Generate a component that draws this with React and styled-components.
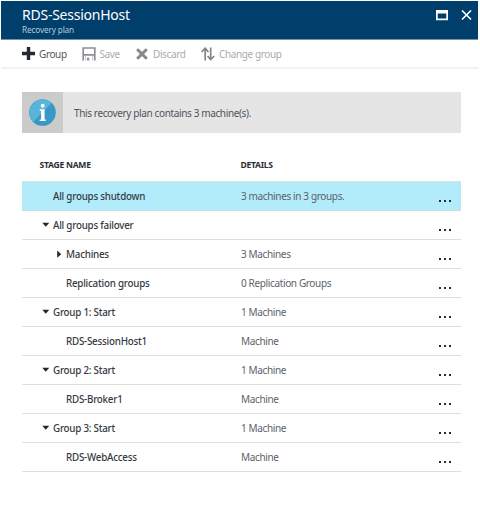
import React from "react";
import styled, { createGlobalStyle } from "styled-components";

const Global = createGlobalStyle`
  * { box-sizing: border-box; }
  body { margin: 0; background: #fff; font-family: "Noto Sans", "Segoe UI", sans-serif; }
  svg { display: block; flex: none; }
`;

const Blade = styled.main`
  width: 480px;
  height: 518px;
  padding: 1px 1px 0;
  overflow: hidden;
`;

const Header = styled.header`
  display: flex;
  justify-content: space-between;
  height: 39px;
  margin-right: 1px;
  padding: 4px 6px 0 21px;
  background: #003e6c;
  border-bottom: 1px solid #7193ae;
  color: #fff;
`;

const Title = styled.h1`
  margin: 0;
  font-size: 14px;
  font-weight: 400;
  line-height: 20px;
  letter-spacing: -0.24px;
`;

const Subtitle = styled.p`
  margin: 0;
  font-size: 8.2px;
  line-height: 9px;
  letter-spacing: -0.13px;
  color: #b5cbdc;
`;

const WindowButtons = styled.div`
  display: flex;
  gap: 13px;
  padding-top: 5px;
`;

const Toolbar = styled.nav`
  display: flex;
  height: 29px;
  padding-left: 21px;
  border-bottom: 2px solid #f2f2f2;
`;

const Command = styled.button`
  display: flex;
  align-items: center;
  gap: ${(p) => p.$gap}px;
  width: ${(p) => p.$width}px;
  padding: 0;
  border: 0;
  background: none;
  font: 400 10px/14px "Noto Sans", sans-serif;
  letter-spacing: -0.38px;
  white-space: nowrap;
  color: ${(p) => (p.$enabled ? "#52575d" : "#a9acaf")};
`;

const CommandLabel = styled.span`
  padding-top: 1px;
`;

const Notice = styled.section`
  display: flex;
  width: 439px;
  height: 41px;
  margin: 23px 0 0 21px;
  background: #e5e5e5;
`;

const NoticeIcon = styled.div`
  display: flex;
  align-items: center;
  justify-content: center;
  width: 41px;
  background: #cbcbcb;
`;

const NoticeText = styled.p`
  margin: 0;
  padding-left: 11px;
  font-size: 10px;
  line-height: 42px;
  letter-spacing: -0.37px;
  color: #50545a;
`;

const Table = styled.div`
  width: 439px;
  margin: 16px 0 0 21px;
`;

const HeadRow = styled.div`
  display: grid;
  grid-template-columns: 201px 1fr;
  height: 33px;
  padding-left: 17.5px;
  border-bottom: 1px solid #dedfdf;
  font-size: 8.6px;
  font-weight: 700;
  line-height: 33px;
  letter-spacing: -0.28px;
  color: #2c3038;
`;

const Row = styled.div`
  display: grid;
  grid-template-columns: 219px 1fr 27px;
  height: 29px;
  background: ${(p) => (p.$selected ? "#b2ebfa" : "#fff")};
  border-bottom: 1px solid ${(p) => (p.$selected ? "#c5dde3" : "#dedfdf")};
  line-height: 30px;
`;

const Stage = styled.div`
  display: flex;
  padding-left: ${(p) => 20 + p.$level * 13}px;
  font-size: 9.8px;
  font-weight: 500;
  letter-spacing: -0.23px;
  color: #363b42;
`;

const Arrow = styled.span`
  display: flex;
  align-items: center;
  width: 11px;
  height: 28px;
`;

const Details = styled.div`
  font-size: 10px;
  line-height: 28px;
  letter-spacing: -0.36px;
  color: #5d6268;
`;

const More = styled.button`
  display: flex;
  gap: 3px;
  align-items: center;
  padding: 7px 0 0 5px;
  border: 0;
  background: none;
`;

const Dot = styled.i`
  width: 2px;
  height: 2px;
  background: #272b33;
`;

const rows = [
  { name: "All groups shutdown", details: "3 machines in 3 groups.", level: 0, selected: true },
  { name: "All groups failover", details: "", level: 0, arrow: "down" },
  { name: "Machines", details: "3 Machines", level: 1, arrow: "right" },
  { name: "Replication groups", details: "0 Replication Groups", level: 1 },
  { name: "Group 1: Start", details: "1 Machine", level: 0, arrow: "down" },
  { name: "RDS-SessionHost1", details: "Machine", level: 1 },
  { name: "Group 2: Start", details: "1 Machine", level: 0, arrow: "down" },
  { name: "RDS-Broker1", details: "Machine", level: 1 },
  { name: "Group 3: Start", details: "1 Machine", level: 0, arrow: "down" },
  { name: "RDS-WebAccess", details: "Machine", level: 1 },
];

const RestoreIcon = () => (
  <svg width="12" height="11" viewBox="0 0 12 11">
    <path d="M0 0h12v10.3H0zM1.7 3.5v5.1h8.6V3.5z" fill="#fff" fillRule="evenodd" />
  </svg>
);

const CloseIcon = () => (
  <svg width="11" height="11" viewBox="0 0 11 11">
    <path d="M1 .5l9 9M10 .5l-9 9" stroke="#fff" strokeWidth="1.6" />
  </svg>
);

const PlusIcon = () => (
  <svg width="13" height="13" viewBox="0 0 13 13">
    <path d="M6.5 0v13M0 6.5h13" stroke="#252a33" strokeWidth="3.4" />
  </svg>
);

const SaveIcon = () => (
  <svg width="14" height="14" viewBox="0 0 14 14">
    <path d="M1.2.3v13.2M12.8.3v13.2M.3 1h13.4M1 7.9h12" fill="none" stroke="#8c8f93" strokeWidth="1.7" />
    <path d="M3.6 8.5v5M10.7 8.5v5" stroke="#b4b6b9" strokeWidth=".8" />
    <path d="M5 10.7h2.3v2.8H5z" fill="#8c8f93" />
  </svg>
);

const DiscardIcon = () => (
  <svg width="12" height="12" viewBox="0 0 12 12">
    <path d="M1.2 1.2l9.6 9.6M10.8 1.2l-9.6 9.6" stroke="#85888c" strokeWidth="3" />
  </svg>
);

const SwapIcon = () => (
  <svg width="14" height="14" viewBox="0 0 14 14">
    <path d="M4.2 13.5V1.2M.7 5l3.5-3.8L7.4 5M9.7.5v12M6.6 9l3.1 3.5L13.2 9" fill="none" stroke="#808388" strokeWidth="1.7" />
  </svg>
);

const InfoIcon = () => (
  <svg width="27" height="27" viewBox="0 0 27 27">
    <circle cx="13.5" cy="13.5" r="13.3" fill="#3999c6" />
    <path d="M4.1 22.9A13.3 13.3 0 0 1 22.9 4.1z" fill="#59b4d9" />
    <circle cx="13.7" cy="6.7" r="2" fill="#fff" />
    <path d="M10.7 10.2h4.9v10.2h1.2v1.5h-6.1v-1.5h1.4v-8.7h-1.4z" fill="#fff" />
  </svg>
);

const ArrowIcon = ({ dir }) =>
  dir === "down" ? (
    <svg width="8" height="6" viewBox="0 0 8 6">
      <path d="M.3.8h7L3.8 4.8z" fill="#22262e" />
    </svg>
  ) : (
    <svg width="11" height="8" viewBox="0 0 11 8">
      <path d="M2.2.6v7.2L6.2 4.2z" fill="#22262e" />
    </svg>
  );

export default function App() {
  return (
    <>
      <Global />
      <Blade>
        <Header>
          <div>
            <Title>RDS-SessionHost</Title>
            <Subtitle>Recovery plan</Subtitle>
          </div>
          <WindowButtons>
            <RestoreIcon />
            <CloseIcon />
          </WindowButtons>
        </Header>
        <Toolbar>
          <Command $enabled $gap={4} $width={60}>
            <PlusIcon />
            <CommandLabel>Group</CommandLabel>
          </Command>
          <Command $gap={3.5} $width={54}>
            <SaveIcon />
            <CommandLabel>Save</CommandLabel>
          </Command>
          <Command $gap={5} $width={65}>
            <DiscardIcon />
            <CommandLabel>Discard</CommandLabel>
          </Command>
          <Command $gap={4} $width={90}>
            <SwapIcon />
            <CommandLabel>Change group</CommandLabel>
          </Command>
        </Toolbar>
        <Notice>
          <NoticeIcon><InfoIcon /></NoticeIcon>
          <NoticeText>This recovery plan contains 3 machine(s).</NoticeText>
        </Notice>
        <Table>
          <HeadRow>
            <span>STAGE NAME</span>
            <span>DETAILS</span>
          </HeadRow>
          {rows.map((r) => (
            <Row key={r.name} $selected={r.selected}>
              <Stage $level={r.level}>
                <Arrow>{r.arrow && <ArrowIcon dir={r.arrow} />}</Arrow>
                {r.name}
              </Stage>
              <Details>{r.details}</Details>
              <More aria-label="More"><Dot /><Dot /><Dot /></More>
            </Row>
          ))}
        </Table>
      </Blade>
    </>
  );
}
